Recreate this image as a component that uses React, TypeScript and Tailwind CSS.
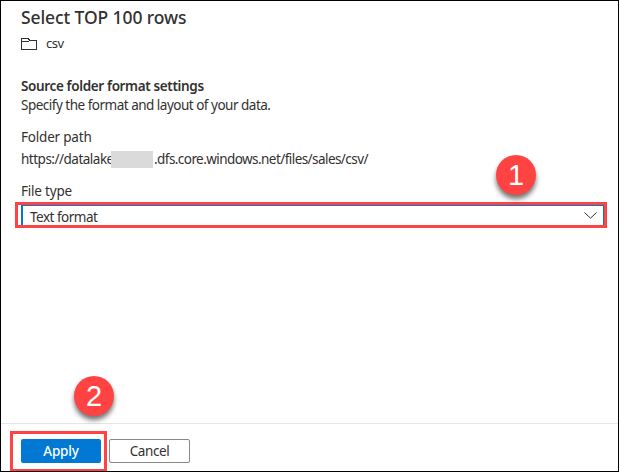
import type { ReactNode } from "react";

function Badge({ children, className }: { children: ReactNode; className: string }) {
  return (
    <div
      className={`absolute flex size-10 items-center justify-center rounded-full bg-[#ff4343] pt-px font-['Liberation_Sans',Arial,sans-serif] text-[29px] leading-none tracking-normal text-white shadow-[0px_4px_5px_rgba(0,0,0,0.55)] ${className}`}
    >
      {children}
    </div>
  );
}

function FolderIcon() {
  return (
    <svg width="16" height="12" viewBox="0 0 16 12" fill="none" stroke="#323130" shapeRendering="crispEdges">
      <path d="M0.5 0.5H7.5L8.5 2.5H15.5V11.5H0.5Z" />
      <path d="M0.5 3.5H7.5L8.5 2.5" />
    </svg>
  );
}

export default function App() {
  return (
    <div className="relative flex h-[472px] w-[619px] flex-col overflow-hidden whitespace-nowrap border border-black bg-white font-['Noto_Sans','Open_Sans',sans-serif] text-[13.5px] leading-[18px] tracking-[-0.5px] text-[#323130]">
      <main className="flex-1 pl-5">
        <h1 className="mt-1 h-6 text-[17.5px] font-medium leading-6 tracking-[-0.1px]">Select TOP 100 rows</h1>
        <div className="mt-1.5 flex h-[18px] items-center gap-[9px]">
          <FolderIcon />
          <span className="-mt-px text-[13px] leading-[17px]">csv</span>
        </div>
        <h2 className="mt-6 text-[13.5px] font-semibold tracking-[-0.36px]">Source folder format settings</h2>
        <p className="mt-px">Specify the format and layout of your data.</p>
        <p className="mt-[14px] tracking-[-0.2px]">Folder path</p>
        <p className="mt-1 flex">
          <span className="w-[90px]">https://datalake</span>
          <span className="mr-px mt-px h-[17px] w-[42px] bg-[#dadada]" />
          <span className="tracking-[-0.56px]">.dfs.core.windows.net/files/sales/csv/</span>
        </p>
        <p className="mt-[14px] tracking-[-0.2px]">File type</p>
        <div className="-ml-1.5 mt-0.5 flex h-[26px] w-[592px] border-[3px] border-[#ff4343] pl-[3px]">
          <div className="flex flex-1 items-center justify-between border-l-2 border-r border-t border-[#0078d4] pl-[7px] pr-[6px] pt-0.5">
            <span>Text format</span>
            <svg className="-mt-[3px]" width="13" height="7" viewBox="0 0 13 7" fill="none" stroke="#323130">
              <path d="M0.5 0.5L6.5 6.2L12.5 0.5" />
            </svg>
          </div>
        </div>
      </main>
      <footer className="flex h-12 border-t border-[#e5e5e5] pl-5 pt-[15px]">
        <button className="h-6 w-20 rounded-[2px] bg-[#0078d4] font-medium tracking-[-0.2px] text-white">Apply</button>
        <button className="ml-2 h-6 w-[81px] rounded-[2px] border border-[#8a8886] tracking-[-0.4px]">Cancel</button>
      </footer>
      <div className="absolute -bottom-px left-[9px] h-[41px] w-[97px] border-[3px] border-[#ff4343]" />
      <Badge className="left-[495px] top-[154px]">1</Badge>
      <Badge className="left-[73px] top-[375px]">2</Badge>
    </div>
  );
}
